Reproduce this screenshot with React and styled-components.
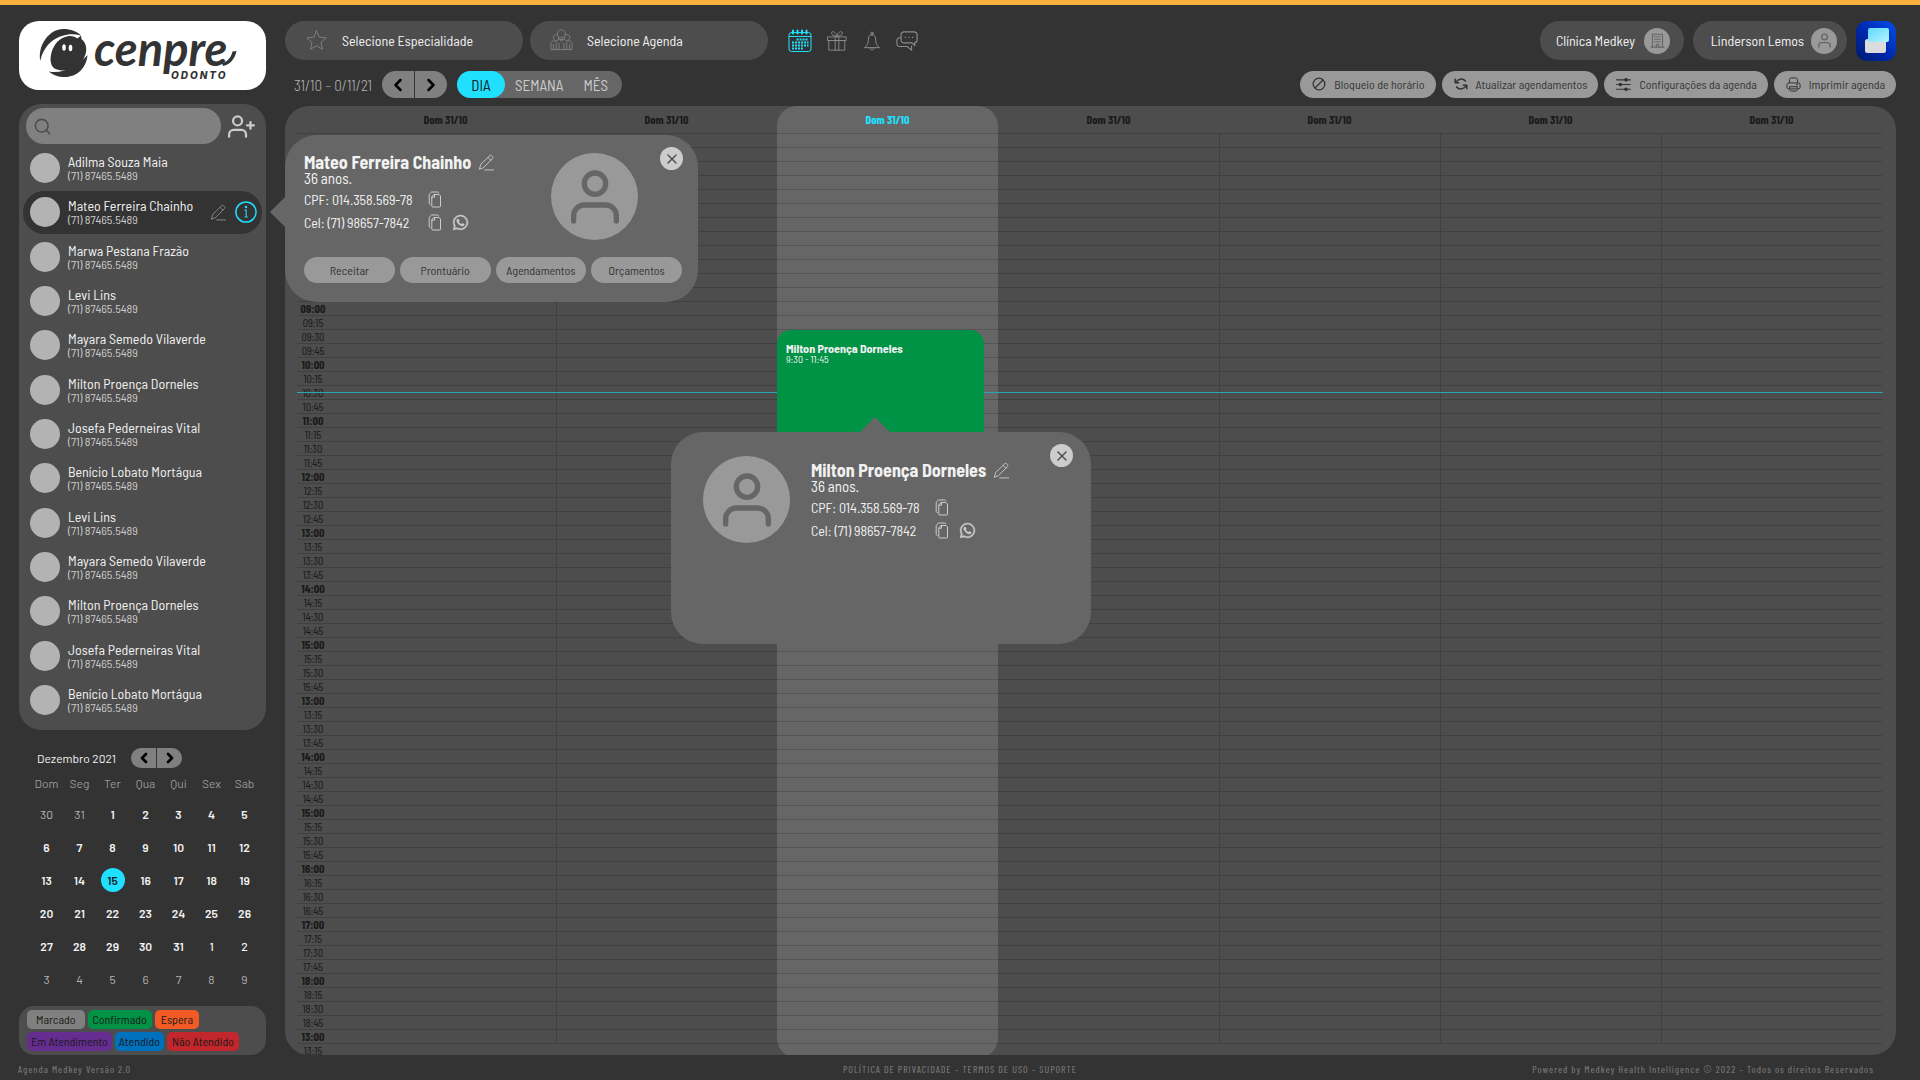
import React, { useState } from "react";
import styled, { createGlobalStyle, css } from "styled-components";
import { FiUser, FiUserPlus, FiSearch, FiX, FiChevronLeft, FiChevronRight } from "react-icons/fi";
import { FaWhatsapp } from "react-icons/fa";

const ROW = 14;
const HEADER = 28;

const GlobalStyle = createGlobalStyle`
  * {
    box-sizing: border-box;
  }
  body {
    margin: 0;
    background: #333;
    color: #f2f2f2;
    font-family: "Barlow Semi Condensed", "Roboto Condensed", Roboto, sans-serif;
    font-size: 14px;
  }
  button, input, select {
    margin: 0;
    padding: 0;
    border: 0;
    background: none;
    color: inherit;
    font: inherit;
  }
  button {
    cursor: pointer;
  }
  p, h2 {
    margin: 0;
  }
  svg {
    display: block;
    flex-shrink: 0;
  }
`;

/* ---------- shell ---------- */

const Page = styled.div`
  display: flex;
  flex-direction: column;
  height: 100vh;
  border-top: 5px solid #fbb03b;
`;

const Body = styled.div`
  display: grid;
  grid-template-columns: 247px minmax(0, 1fr);
  gap: 19px;
  flex: 1;
  min-height: 0;
  padding: 16px 24px 0 19px;
`;

const Sidebar = styled.aside`
  display: flex;
  flex-direction: column;
  min-height: 0;
`;

const Main = styled.main`
  display: flex;
  flex-direction: column;
  min-width: 0;
  min-height: 0;
`;

const Footer = styled.footer`
  display: grid;
  grid-template-columns: 1fr auto 1fr;
  align-items: center;
  height: 25px;
  padding: 2px 18px 0;
  color: #808080;
  font-family: "Barlow Condensed", "Roboto Condensed", Roboto, sans-serif;
  font-size: 10px;
  letter-spacing: 1px;
`;

const FooterLinks = styled.nav`
  a {
    color: inherit;
    text-decoration: none;
  }
`;

const Powered = styled.span`
  padding-right: 28px;
  text-align: right;
`;

/* ---------- sidebar ---------- */

const LogoCard = styled.a`
  display: block;
  height: 69px;
  margin-bottom: 14px;
  border-radius: 20px;
  background: #fff;
`;

const PatientPanel = styled.section`
  display: flex;
  flex-direction: column;
  flex: 1;
  min-height: 0;
  padding: 4px 4px 8px;
  border-radius: 22px;
  background: #4d4d4d;
`;

const SearchRow = styled.div`
  display: flex;
  align-items: center;
  gap: 7px;
  padding: 0 3px;
  margin-bottom: 2px;
`;

const SearchBox = styled.label`
  display: flex;
  align-items: center;
  gap: 6px;
  width: 195px;
  height: 36px;
  padding: 0 7px;
  border-radius: 18px;
  background: #808080;
  color: #4d4d4d;
  input {
    flex: 1;
    min-width: 0;
    outline: none;
  }
`;

const PatientList = styled.ul`
  display: grid;
  grid-auto-rows: 1fr;
  flex: 1;
  margin: 0;
  padding: 0;
  list-style: none;
`;

const PatientItem = styled.li`
  position: relative;
  display: flex;
  align-items: center;
  gap: 8px;
  margin: 1px 0;
  padding: 0 5px 0 7px;
  border-radius: 21px;
  background: ${(p) => (p.$active ? "#333" : "transparent")};
`;

const Avatar = styled.span`
  width: 30px;
  height: 30px;
  border-radius: 50%;
  background: #b3b3b3;
`;

const PatientText = styled.div`
  flex: 1;
  padding-top: 1px;
  font-size: 14px;
  line-height: 14px;
  small {
    display: block;
    color: #ccc;
    font-size: 12px;
    line-height: 13px;
  }
`;

const IconButton = styled.button`
  display: grid;
  place-items: center;
  color: ${(p) => p.$color || "#ccc"};
`;

const MiniCalendar = styled.section`
  padding: 18px 5px 11px 11px;
  font-family: Barlow, Roboto, sans-serif;
  font-size: 12px;
`;

const MiniHead = styled.div`
  display: flex;
  align-items: center;
  justify-content: space-between;
  height: 20px;
  padding: 0 79px 0 7px;
`;

const Pager = styled.div`
  display: flex;
  gap: 1px;
  height: ${(p) => (p.$small ? 20 : 27)}px;
  button {
    display: grid;
    place-items: center;
    width: ${(p) => (p.$small ? 25 : 32)}px;
    background: #808080;
    color: #000;
  }
  button:first-child {
    border-radius: 14px 0 0 14px;
  }
  button:last-child {
    border-radius: 0 14px 14px 0;
  }
`;

const MonthTable = styled.table`
  width: 100%;
  table-layout: fixed;
  border-spacing: 0;
  text-align: center;
  th {
    height: 29px;
    padding: 0;
    color: #999;
    font-weight: 400;
  }
  td {
    height: 33px;
    padding: 0;
  }
`;

const Day = styled.button`
  width: 24px;
  height: 24px;
  border-radius: 50%;
  font-weight: 600;
  ${(p) => p.$tone === "soft" && css`font-weight: 500;`}
  ${(p) => p.$tone === "out" && css`
    color: #b3b3b3;
    font-weight: 400;
  `}
  ${(p) => p.$selected && css`
    background: #1fe0ff;
    color: #1a1a1a;
  `}
`;

const Legend = styled.section`
  display: flex;
  flex-wrap: wrap;
  gap: 3px;
  padding: 4px 8px;
  border-radius: 15px;
  background: #4d4d4d;
`;

const Tag = styled.span`
  height: 19px;
  padding: 0 ${(p) => p.$pad || 4}px;
  border-radius: 5px;
  background: ${(p) => p.$color};
  color: #1a1a1a;
  font-size: 12px;
  line-height: 19px;
`;

/* ---------- top bars ---------- */

const TopBar = styled.header`
  display: flex;
  align-items: center;
  height: 39px;
  gap: 7px;
`;

const SelectPill = styled.label`
  display: flex;
  align-items: center;
  gap: 14px;
  width: 238px;
  height: 39px;
  padding: 0 20px;
  border-radius: 20px;
  background: #4d4d4d;
  color: #808080;
  select {
    flex: 1;
    appearance: none;
    color: #f2f2f2;
    outline: none;
  }
`;

const Shortcuts = styled.nav`
  display: flex;
  align-items: center;
  gap: 14px;
  margin-left: 13px;
`;

const Account = styled.div`
  display: flex;
  align-items: center;
  gap: 9px;
  margin-left: auto;
`;

const AccountPill = styled.button`
  display: flex;
  align-items: center;
  justify-content: flex-end;
  gap: ${(p) => p.$gap}px;
  width: ${(p) => p.$width}px;
  height: 39px;
  padding-right: ${(p) => p.$end}px;
  border-radius: 20px;
  background: #4d4d4d;
`;

const RoundIcon = styled.span`
  display: grid;
  place-items: center;
  width: 26px;
  height: 26px;
  border-radius: 50%;
  background: #999;
  color: #666;
`;

const Toolbar = styled.div`
  display: flex;
  align-items: center;
  gap: 10px;
  height: 27px;
  margin: 11px 0 8px;
`;

const Range = styled.span`
  padding-left: 9px;
  color: #b3b3b3;
  font-size: 15px;
  font-weight: 300;
`;

const Views = styled.div`
  display: flex;
  height: 27px;
  padding-right: 4px;
  border-radius: 14px;
  background: #666;
`;

const ViewButton = styled.button`
  min-width: 44px;
  padding: 0 10px;
  border-radius: 14px;
  color: #ccc;
  font-size: 15px;
  ${(p) => p.$active && css`
    min-width: 48px;
    background: #1fe0ff;
    color: #1a1a1a;
  `}
`;

const Actions = styled.div`
  display: flex;
  gap: 6px;
  margin-left: auto;
`;

const ActionButton = styled.button`
  display: flex;
  align-items: center;
  gap: 8px;
  height: 27px;
  padding: 0 11px 1px 12px;
  border-radius: 14px;
  background: #999;
  color: #333;
  font-size: 12px;
`;

/* ---------- schedule ---------- */

const Schedule = styled.section`
  position: relative;
  display: grid;
  flex: 1;
  min-height: 0;
  padding: 0 14px 0 12px;
  border-radius: 24px;
  background: #4d4d4d;
  overflow: hidden;
`;

const Columns = styled.div`
  display: grid;
  grid-area: 1 / 1;
  grid-template-columns: 38px repeat(7, 1fr);
  min-height: 0;
`;

const TodayColumn = styled.div`
  grid-column: 4;
  border-radius: 20px;
  background: #666;
`;

const WeekTable = styled.table`
  grid-area: 1 / 1;
  align-self: start;
  width: 100%;
  table-layout: fixed;
  border-spacing: 0;
  color: #1a1a1a;
  font-family: "Barlow Condensed", "Roboto Condensed", Roboto, sans-serif;
  th, td {
    padding: 0;
    border-bottom: 1px solid rgba(0, 0, 0, 0.16);
  }
`;

const DayHead = styled.th`
  height: ${HEADER}px;
  color: ${(p) => (p.$today ? "#1fe0ff" : "inherit")};
  font-size: 12px;
  font-weight: 700;
  line-height: 26px;
  vertical-align: top;
`;

const TimeHead = styled.th`
  width: 38px;
  height: ${(p) => (p.$corner ? HEADER : ROW)}px;
  font-size: 12px;
  font-weight: ${(p) => (p.$hour ? 700 : 400)};
  line-height: 13px;
  span {
    display: block;
    width: 32px;
  }
`;

const Slot = styled.td`
  position: relative;
  height: ${ROW}px;
  border-left: ${(p) => (p.$divider ? "1px solid rgba(0, 0, 0, 0.16)" : "0")};
`;

const NowLine = styled.div`
  position: absolute;
  left: 12px;
  right: 13px;
  height: 1px;
  background: #2aa5b5;
`;

const Event = styled.article`
  position: absolute;
  z-index: 2;
  top: 0;
  left: 0;
  right: 14px;
  height: ${(p) => p.$slots * ROW}px;
  padding: 12px 9px;
  border-radius: 14px;
  background: #009245;
  color: #f2f2f2;
  font-family: "Barlow Semi Condensed", "Roboto Condensed", Roboto, sans-serif;
  font-size: 10px;
  line-height: 10px;
  strong {
    display: block;
    font-size: 12px;
    line-height: 12px;
  }
`;

/* ---------- patient popovers ---------- */

const Bubble = styled.div`
  position: absolute;
  z-index: 5;
  border-radius: 32px;
  background: #666;
  color: #f2f2f2;
  &::before {
    content: "";
    position: absolute;
    border: 15px solid transparent;
  }
`;

const SideBubble = styled(Bubble)`
  top: -56px;
  left: calc(100% + 23px);
  width: 413px;
  padding: 18px 16px 19px 19px;
  &::before {
    top: 62px;
    right: 100%;
    border-right-color: #666;
  }
`;

const EventBubble = styled(Bubble)`
  top: 102px;
  left: -106px;
  width: 420px;
  height: 212px;
  padding: 24px 32px;
  &::before {
    bottom: 100%;
    left: 189px;
    border-bottom-color: #666;
  }
`;

const CloseButton = styled.button`
  position: absolute;
  top: 12px;
  right: ${(p) => p.$right}px;
  display: grid;
  place-items: center;
  width: 23px;
  height: 23px;
  border-radius: 50%;
  background: #ccc;
  color: #4d4d4d;
`;

const CardRow = styled.div`
  display: flex;
  gap: 21px;
`;

const Photo = styled.span`
  display: grid;
  place-items: center;
  width: 87px;
  height: 87px;
  border-radius: 50%;
  background: #999;
  color: #666;
`;

const Details = styled.div`
  width: 226px;
  padding-top: ${(p) => p.$top || 0}px;
`;

const NameLine = styled.div`
  display: flex;
  align-items: center;
  gap: 7px;
  color: #f2f2f2;
  h2 {
    font-size: 18px;
    line-height: 18px;
    font-weight: 700;
    white-space: nowrap;
  }
`;

const Age = styled.p`
  margin-bottom: 3px;
  font-size: 15px;
  line-height: 14px;
`;

const Contact = styled.div`
  display: flex;
  align-items: center;
  gap: 10px;
  height: 23px;
  p {
    width: 114px;
    font-size: 14px;
  }
`;

const ButtonRow = styled.div`
  display: grid;
  grid-template-columns: repeat(4, 1fr);
  gap: 5px;
  margin-top: 17px;
  button {
    height: 26px;
    border-radius: 13px;
    background: #999;
    color: #333;
    font-size: 12px;
  }
`;

/* ---------- drawings ---------- */

const Svg = ({ w = 24, h = w, box = 24, sw = 1, children, ...rest }) => (
  <svg width={w} height={h} viewBox={`0 0 ${box} ${(box * h) / w}`} fill="none" stroke="currentColor" strokeWidth={sw} strokeLinecap="round" strokeLinejoin="round" aria-hidden="true" {...rest}>
    {children}
  </svg>
);

const CenpreLogo = () => (
  <svg width="247" height="69" viewBox="0 0 247 69" overflow="visible" fill="#333" role="img" aria-label="Cenpre Odonto">
    <path d="M21.3 40C18.5 23 31 8 44 8C52 8 58 10.500 62 14.500C46 10 26 18 21.300 40Z" />
    <path d="M32 42C30 31 37 17.500 48 15.500C52 14.500 56 15.500 58.500 17.500L62 14.500L62.500 18C68.500 23 68.500 31 64.500 38C60 46 51 50 43.500 49.500C37 49 33 47 32 42Z" />
    <path d="M30 50.500C44 53 58 46 68.500 34C67.500 47 58 56 46 56C39 56 33.500 54 30 50.500Z" />
    <ellipse cx="45" cy="26.500" rx="1.800" ry="3.200" fill="#fff" />
    <ellipse cx="51.500" cy="27" rx="1.800" ry="3.200" fill="#fff" />
    <text x="75" y="45" fontFamily="Lato, sans-serif" fontSize="47" fontStyle="italic" fontWeight="700">
      cenpre
    </text>
    <path d="M204 45C211 43.500 216 38 217.500 30L213.500 30.500C212 37 208 41 203 42Z" />
    <text x="152" y="58" fontFamily="Inter, sans-serif" fontSize="10" fontStyle="italic" fontWeight="800" letterSpacing="2">
      ODONTO
    </text>
  </svg>
);

const StarIcon = () => (
  <Svg w={23}>
    <path d="M12 2l2.900 6.500 7.100.8-5.300 4.800 1.500 7L12 17.500 5.800 21.100l1.500-7L2 9.300l7.100-.8z" />
  </Svg>
);

const PeopleIcon = () => (
  <Svg w={23}>
    <circle cx="12" cy="5" r="4.200" />
    <path d="M9 8v2.500M15 8v2.500M6.500 21.500v-7.500c0-2 1.500-3 3.500-3h4c2 0 3.500 1 3.500 3v7.500M9.500 21.500V15M14.500 21.500V15M10.500 11l1.500 2 1.500-2" />
    <path d="M7 6c-2-.5-3.500.8-3.500 2.500S4.500 11.500 5.500 12M17 6c2-.5 3.500.8 3.500 2.500s-1 3-2 3.500M5.500 12c-3 .5-4.500 1-4.500 3.500v6h22v-6c0-2.500-1.500-3-4.500-3.500M3.500 21.500V16M20.500 21.500V16" />
  </Svg>
);

const CalendarIcon = () => (
  <Svg w={24}>
    <rect x="1" y="3.500" width="22" height="19" rx="2.500" />
    <path d="M5 1.500v3M9.500 1.500v3M14 1.500v3M18.500 1.500v3" strokeWidth="2" />
    <path d="M1 7.500h22" />
    <path d="M8.500 10.500h12M4 13.500h16.500M4 16.500h16.500M4 19.500h12" strokeWidth="2.200" strokeDasharray="2 1" strokeLinecap="butt" />
  </Svg>
);

const GiftIcon = () => (
  <Svg w={22}>
    <path d="M2 7.500h20v4H2zM3.500 11.500h17V22h-17zM10 7.500V22M14 7.500V22" />
    <path d="M12 7C9 6.500 6 5.500 6 3.500 6 2 7.500 1.500 9 2.200c1.600.8 2.500 2.800 3 4.800.5-2 1.400-4 3-4.800 1.500-.7 3-.2 3 1.300 0 2-3 3-6 3.500z" />
  </Svg>
);

const BellIcon = () => (
  <Svg w={20} sw={1.200}>
    <path d="M12 4.500c-3.500 0-4.500 2.800-4.500 6.500 0 4.500-1 5.800-4.500 9h18c-3.500-3.200-4.500-4.500-4.500-9 0-3.700-1-6.500-4.500-6.500zM9.500 20.500c.5 3 4.500 3 5 0" />
    <circle cx="12" cy="2.800" r="1.500" />
  </Svg>
);

const ChatIcon = () => (
  <Svg w={22} sw={1.200}>
    <path d="M9 2h10.500C21.500 2 23 3.500 23 5.500v5c0 2-1 3-2.500 3.300V17l-3.200-3H9c-2 0-3.500-1.500-3.500-3.500v-5C5.500 3.500 7 2 9 2z" />
    <path d="M5.500 8.500H4C2 8.500 1 10 1 11.500v3C1 17 2.500 18 4 18h8l5 4v-4.500M10 8h.5M14 8h.5M18 8h.5" />
  </Svg>
);

const PencilIcon = () => (
  <Svg w={17} sw={1.300}>
    <path d="M2 21l2-6.500L16.500 2.500c1-.9 2.200-.7 3 .1l1 1c.8.900.8 2-.1 2.900L8 19zM14.500 5l3.500 3.500M9.500 22.500H22" />
  </Svg>
);

const InfoIcon = () => (
  <Svg w={22} sw={1.600}>
    <circle cx="12" cy="12" r="11" />
    <path d="M11 10h1.200v7.500M11 17.500h2.400" strokeWidth="1.200" />
    <circle cx="12" cy="6.500" r=".6" fill="currentColor" />
  </Svg>
);

const CopyIcon = () => (
  <Svg w={14} h={17} box={14}>
    <path d="M6.500 3.500H11l1.500 1.500v10c0 .8-.5 1-1 1H4.800c-.6 0-1-.4-1-1v-9zM6.500 3.500v2.700H3.800M2.200 13.500c-.6 0-1-.5-1-1v-9.200L3.500 1h6.300c.6 0 1 .4 1 1" />
  </Svg>
);

const BuildingIcon = () => (
  <Svg w={15}>
    <path d="M4 22V2h16v20M1.500 22.500h21M7.500 6h2M11 6h2M14.500 6h2M7.500 10h2M11 10h2M14.500 10h2M7.500 14h2M11 14h2M14.500 14h2M10 22v-4h4v4" strokeWidth="1.800" />
  </Svg>
);

const BlockIcon = () => (
  <Svg w={14} sw={2.200}>
    <circle cx="12" cy="12" r="10" />
    <path d="M5.500 18.500l13-13" />
  </Svg>
);

const RefreshIcon = () => (
  <Svg w={14} sw={2.600}>
    <path d="M2 4v6h6M3 9.500C6 3 15 1.500 19.500 7M22 20v-6h-6M21 14.500C18 21 9 22.500 4.500 17" />
  </Svg>
);

const SlidersIcon = () => (
  <Svg w={15} sw={1.800}>
    <path d="M1 4.500h22M1 12h22M1 19.500h22" />
    <circle cx="16" cy="4.500" r="2" fill="currentColor" />
    <circle cx="7" cy="12" r="2" fill="currentColor" />
    <circle cx="16" cy="19.500" r="2" fill="currentColor" />
  </Svg>
);

const PrinterIcon = () => (
  <Svg w={15} sw={1.600}>
    <path d="M5.500 9.500V5c0-2 1-3.500 3-3.500h7c2 0 3 1.500 3 3.500v4.500M6 19H4.500c-2 0-3-1-3-3v-3.500c0-2 1-3 3-3h15c2 0 3 1 3 3V16c0 2-1 3-3 3H18M6 15.500h12v4c0 2-1 3-3 3H9c-2 0-3-1-3-3zM8 19h8M16.500 12.500h2" />
  </Svg>
);

const BrandTile = () => (
  <svg width="40" height="40" viewBox="0 0 40 40" role="img" aria-label="Medkey">
    <defs>
      <linearGradient id="tile" x1="0" y1="1" x2="1" y2="0">
        <stop offset="0" stopColor="#001a6e" />
        <stop offset=".5" stopColor="#0029b0" />
        <stop offset="1" stopColor="#0050ee" />
      </linearGradient>
      <linearGradient id="sheet" x1="0" y1="0" x2="1" y2="1">
        <stop offset="0" stopColor="#5fd8ff" />
        <stop offset="1" stopColor="#b5f6ff" />
      </linearGradient>
    </defs>
    <rect width="40" height="40" rx="11" fill="url(#tile)" />
    <rect x="9" y="18" width="21" height="14" rx="2.500" fill="#dcdcdc" />
    <rect x="12" y="7" width="21" height="14" rx="2" fill="url(#sheet)" />
  </svg>
);

/* ---------- data ---------- */

const patients = [
  "Adilma Souza Maia",
  "Mateo Ferreira Chainho",
  "Marwa Pestana Frazão",
  "Levi Lins",
  "Mayara Semedo Vilaverde",
  "Milton Proença Dorneles",
  "Josefa Pederneiras Vital",
  "Benício Lobato Mortágua",
  "Levi Lins",
  "Mayara Semedo Vilaverde",
  "Milton Proença Dorneles",
  "Josefa Pederneiras Vital",
  "Benício Lobato Mortágua",
];

const weekdays = ["Dom", "Seg", "Ter", "Qua", "Qui", "Sex", "Sab"];

const weeks = [
  [30, 31, 1, 2, 3, 4, 5],
  [6, 7, 8, 9, 10, 11, 12],
  [13, 14, 15, 16, 17, 18, 19],
  [20, 21, 22, 23, 24, 25, 26],
  [27, 28, 29, 30, 31, 1, 2],
  [3, 4, 5, 6, 7, 8, 9],
];

const dayTone = (week, day) => {
  if (week === 5 || (week === 0 && day > 20)) return "out";
  if (week === 4 && day < 10) return "soft";
  return "in";
};

const legend = [
  { label: "Marcado", color: "#808080", pad: 9 },
  { label: "Confirmado", color: "#009245", pad: 5 },
  { label: "Espera", color: "#f15a24", pad: 6 },
  { label: "Em Atendimento", color: "#662d91", pad: 4 },
  { label: "Atendido", color: "#0071bc", pad: 4 },
  { label: "Não Atendido", color: "#c1272d", pad: 5 },
];

const hours = ["09", "10", "11", "12", "13", "14", "15", "13", "14", "15", "16", "17", "18", "13"];
// the twelve rows before opening time carry no label
const slots = [
  ...Array(12).fill(""),
  ...hours.flatMap((h) => ["00", "15", "30", "45"].map((m) => `${h}:${m}`)),
].slice(0, 66);
const days = [0, 1, 2, 3, 4, 5, 6];
const TODAY = 2;
const EVENT_SLOT = 14;
const NOW = HEADER + 18 * ROW + 6;

/* ---------- components ---------- */

const PatientDetails = ({ name, top }) => (
  <Details $top={top}>
    <NameLine>
      <h2>{name}</h2>
      <IconButton aria-label="Editar"><PencilIcon /></IconButton>
    </NameLine>
    <Age>36 anos.</Age>
    <Contact>
      <p>CPF: 014.358.569-78</p>
      <IconButton aria-label="Copiar CPF"><CopyIcon /></IconButton>
    </Contact>
    <Contact>
      <p>Cel: (71) 98657-7842</p>
      <IconButton aria-label="Copiar celular"><CopyIcon /></IconButton>
      <IconButton aria-label="WhatsApp"><FaWhatsapp size={17} stroke="currentColor" strokeWidth={14} /></IconButton>
    </Contact>
  </Details>
);

const PatientBubble = ({ name, onClose }) => (
  <SideBubble role="dialog" aria-label={name}>
    <CloseButton $right={15} aria-label="Fechar" onClick={onClose}>
      <FiX size={16} />
    </CloseButton>
    <CardRow>
      <PatientDetails name={name} />
      <Photo><FiUser size={64} strokeWidth={2} /></Photo>
    </CardRow>
    <ButtonRow>
      <button>Receitar</button>
      <button>Prontuário</button>
      <button>Agendamentos</button>
      <button>Orçamentos</button>
    </ButtonRow>
  </SideBubble>
);

const Patients = () => {
  const [open, setOpen] = useState(true);

  return (
    <PatientPanel>
      <SearchRow>
        <SearchBox>
          <FiSearch size={19} />
          <input type="search" aria-label="Buscar paciente" />
        </SearchBox>
        <IconButton aria-label="Adicionar paciente">
          <FiUserPlus size={27} />
        </IconButton>
      </SearchRow>
      <PatientList>
        {patients.map((name, i) => {
          const active = i === 1;
          return (
            <PatientItem key={i} $active={active}>
              <Avatar />
              <PatientText>
                {name}
                <small>(71) 87465.5489</small>
              </PatientText>
              {active && (
                <>
                  <IconButton $color="#8c8c8c" aria-label="Editar"><PencilIcon /></IconButton>
                  <IconButton $color="#1fe0ff" aria-label="Informações" onClick={() => setOpen(!open)}>
                    <InfoIcon />
                  </IconButton>
                  {open && <PatientBubble name={name} onClose={() => setOpen(false)} />}
                </>
              )}
            </PatientItem>
          );
        })}
      </PatientList>
    </PatientPanel>
  );
};

const Month = () => (
  <MiniCalendar>
    <MiniHead>
      <span>Dezembro 2021</span>
      <Pager $small>
        <button aria-label="Mês anterior"><FiChevronLeft size={16} strokeWidth={4} /></button>
        <button aria-label="Próximo mês"><FiChevronRight size={16} strokeWidth={4} /></button>
      </Pager>
    </MiniHead>
    <MonthTable>
      <thead>
        <tr>{weekdays.map((d) => <th key={d}>{d}</th>)}</tr>
      </thead>
      <tbody>
        {weeks.map((week, w) => (
          <tr key={w}>
            {week.map((day) => (
              <td key={day}>
                <Day $tone={dayTone(w, day)} $selected={w === 2 && day === 15}>{day}</Day>
              </td>
            ))}
          </tr>
        ))}
      </tbody>
    </MonthTable>
  </MiniCalendar>
);

const Appointment = () => {
  const [open, setOpen] = useState(true);

  return (
    <Event $slots={9}>
      <strong>Milton Proença Dorneles</strong>
      9:30 - 11:45
      {open && (
        <EventBubble role="dialog" aria-label="Milton Proença Dorneles">
          <CloseButton $right={18} aria-label="Fechar" onClick={() => setOpen(false)}>
            <FiX size={16} />
          </CloseButton>
          <CardRow>
            <Photo><FiUser size={64} strokeWidth={2} /></Photo>
            <PatientDetails name="Milton Proença Dorneles" top={5} />
          </CardRow>
        </EventBubble>
      )}
    </Event>
  );
};

const Week = () => (
  <Schedule>
    <Columns><TodayColumn /></Columns>
    <WeekTable>
      <thead>
        <tr>
          <TimeHead $corner aria-label="Horário" />
          {days.map((d) => <DayHead key={d} $today={d === TODAY}>Dom 31/10</DayHead>)}
        </tr>
      </thead>
      <tbody>
        {slots.map((time, row) => (
          <tr key={row}>
            <TimeHead scope="row" $hour={time.endsWith("00")}><span>{time}</span></TimeHead>
            {days.map((d) => (
              <Slot key={d} $divider={row < 65 && [1, 4, 5, 6].includes(d)}>
                {d === TODAY && row === EVENT_SLOT && <Appointment />}
              </Slot>
            ))}
          </tr>
        ))}
      </tbody>
    </WeekTable>
    <NowLine style={{ top: NOW }} />
  </Schedule>
);

const App = () => (
  <>
    <GlobalStyle />
    <Page>
      <Body>
        <Sidebar>
          <LogoCard href="#"><CenpreLogo /></LogoCard>
          <Patients />
          <Month />
          <Legend>
            {legend.map((l) => (
              <Tag key={l.label} $color={l.color} $pad={l.pad}>{l.label}</Tag>
            ))}
          </Legend>
        </Sidebar>
        <Main>
          <TopBar>
            <SelectPill>
              <StarIcon />
              <select aria-label="Especialidade"><option>Selecione Especialidade</option></select>
            </SelectPill>
            <SelectPill>
              <PeopleIcon />
              <select aria-label="Agenda"><option>Selecione Agenda</option></select>
            </SelectPill>
            <Shortcuts>
              <IconButton $color="#1fe0ff" aria-label="Agenda"><CalendarIcon /></IconButton>
              <IconButton $color="#8c8c8c" aria-label="Aniversários"><GiftIcon /></IconButton>
              <IconButton $color="#8c8c8c" aria-label="Notificações"><BellIcon /></IconButton>
              <IconButton $color="#8c8c8c" aria-label="Mensagens"><ChatIcon /></IconButton>
            </Shortcuts>
            <Account>
              <AccountPill $width={144} $gap={9} $end={14}>
                Clínica Medkey
                <RoundIcon><BuildingIcon /></RoundIcon>
              </AccountPill>
              <AccountPill $width={154} $gap={7} $end={10}>
                Linderson Lemos
                <RoundIcon><FiUser size={17} /></RoundIcon>
              </AccountPill>
              <BrandTile />
            </Account>
          </TopBar>
          <Toolbar>
            <Range>31/10 – 0/11/21</Range>
            <Pager>
              <button aria-label="Anterior"><FiChevronLeft size={20} strokeWidth={3} /></button>
              <button aria-label="Próximo"><FiChevronRight size={20} strokeWidth={3} /></button>
            </Pager>
            <Views>
              <ViewButton $active>DIA</ViewButton>
              <ViewButton>SEMANA</ViewButton>
              <ViewButton>MÊS</ViewButton>
            </Views>
            <Actions>
              <ActionButton><BlockIcon />Bloqueio de horário</ActionButton>
              <ActionButton><RefreshIcon />Atualizar agendamentos</ActionButton>
              <ActionButton><SlidersIcon />Configurações da agenda</ActionButton>
              <ActionButton><PrinterIcon />Imprimir agenda</ActionButton>
            </Actions>
          </Toolbar>
          <Week />
        </Main>
      </Body>
      <Footer>
        <span>Agenda Medkey Versão 2.0</span>
        <FooterLinks>
          <a href="#">POLÍTICA DE PRIVACIDADE</a> – <a href="#">TERMOS DE USO</a> – <a href="#">SUPORTE</a>
        </FooterLinks>
        <Powered>Powered by Medkey Health Intelligence © 2022 – Todos os direitos Reservados</Powered>
      </Footer>
    </Page>
  </>
);

export default App;
